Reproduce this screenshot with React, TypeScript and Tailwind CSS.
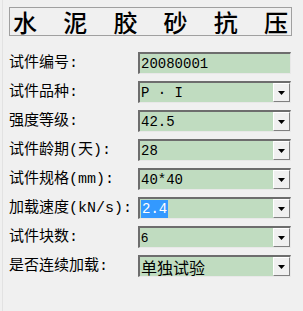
import React from "react";

const labelFont = {
  fontFamily: '"Liberation Mono", "Noto Sans CJK SC", monospace',
};

type Row = {
  label: string;
  value: string;
  kind: "mono" | "sans" | "cjk";
  dropdown: boolean;
  selected?: boolean;
};

const rows: Row[] = [
  { label: "试件编号:", value: "20080001", kind: "mono", dropdown: false },
  { label: "试件品种:", value: "P · I", kind: "mono", dropdown: true },
  { label: "强度等级:", value: "42.5", kind: "mono", dropdown: true },
  { label: "试件龄期(天):", value: "28", kind: "mono", dropdown: true },
  { label: "试件规格(mm):", value: "40*40", kind: "mono", dropdown: true },
  { label: "加载速度(kN/s):", value: "2.4", kind: "mono", dropdown: true, selected: true },
  { label: "试件块数:", value: "6", kind: "sans", dropdown: true },
  { label: "是否连续加载:", value: "单独试验", kind: "cjk", dropdown: true },
];

function Arrow() {
  return (
    <div className="flex h-full w-[17px] items-center justify-center border-t border-l border-t-white border-l-white border-b border-r border-b-[#808080] border-r-[#808080] bg-[#f0f0f0]">
      <svg width="7" height="4" viewBox="0 0 7 4">
        <path d="M0 0H7L3.5 4Z" fill="#000" />
      </svg>
    </div>
  );
}

function Field({ row }: { row: Row }) {
  const font =
    row.kind === "mono"
      ? "font-['Liberation_Mono',monospace] text-[14px]"
      : row.kind === "sans"
      ? "font-['Liberation_Sans',sans-serif] text-[13px]"
      : "font-['Noto_Sans_CJK_SC',sans-serif] text-[16px]";
  return (
    <div className="flex h-[22px] w-[153px] border-t-2 border-l-2 border-t-[#6d6d6d] border-l-[#6d6d6d] border-b border-r border-b-[#e8e8e8] border-r-[#e8e8e8] bg-[#c0dcc0]">
      <div className={`flex flex-1 items-center pl-[1px] leading-none text-black ${font}`}>
        {row.selected ? (
          <span className="bg-[#3399ff] px-[1px] py-[2px] text-white">{row.value}</span>
        ) : (
          <span>{row.value}</span>
        )}
      </div>
      {row.dropdown && <Arrow />}
    </div>
  );
}

export default function App() {
  return (
    <div className="h-[311px] w-[303px] overflow-hidden bg-[#f0f0f0]">
      <div className="ml-[2px] h-full border-l border-[#e2e2e2] pt-[7px]">
        <div className="ml-[6px] flex h-[29px] w-[283px] items-center justify-between border border-[#a0a0a0] px-[3px] font-['Noto_Sans_CJK_SC',serif] text-[24px] font-medium leading-none text-black">
          <span>水</span>
          <span>泥</span>
          <span>胶</span>
          <span>砂</span>
          <span>抗</span>
          <span>压</span>
        </div>
        <div className="mt-[16px] flex flex-col gap-[7px]">
          {rows.map((row) => (
            <div key={row.label} className="flex items-center">
              <div
                className="w-[135px] pl-[6px] text-[15px] leading-none text-black"
                style={labelFont}
              >
                {row.label}
              </div>
              <Field row={row} />
            </div>
          ))}
        </div>
      </div>
    </div>
  );
}
